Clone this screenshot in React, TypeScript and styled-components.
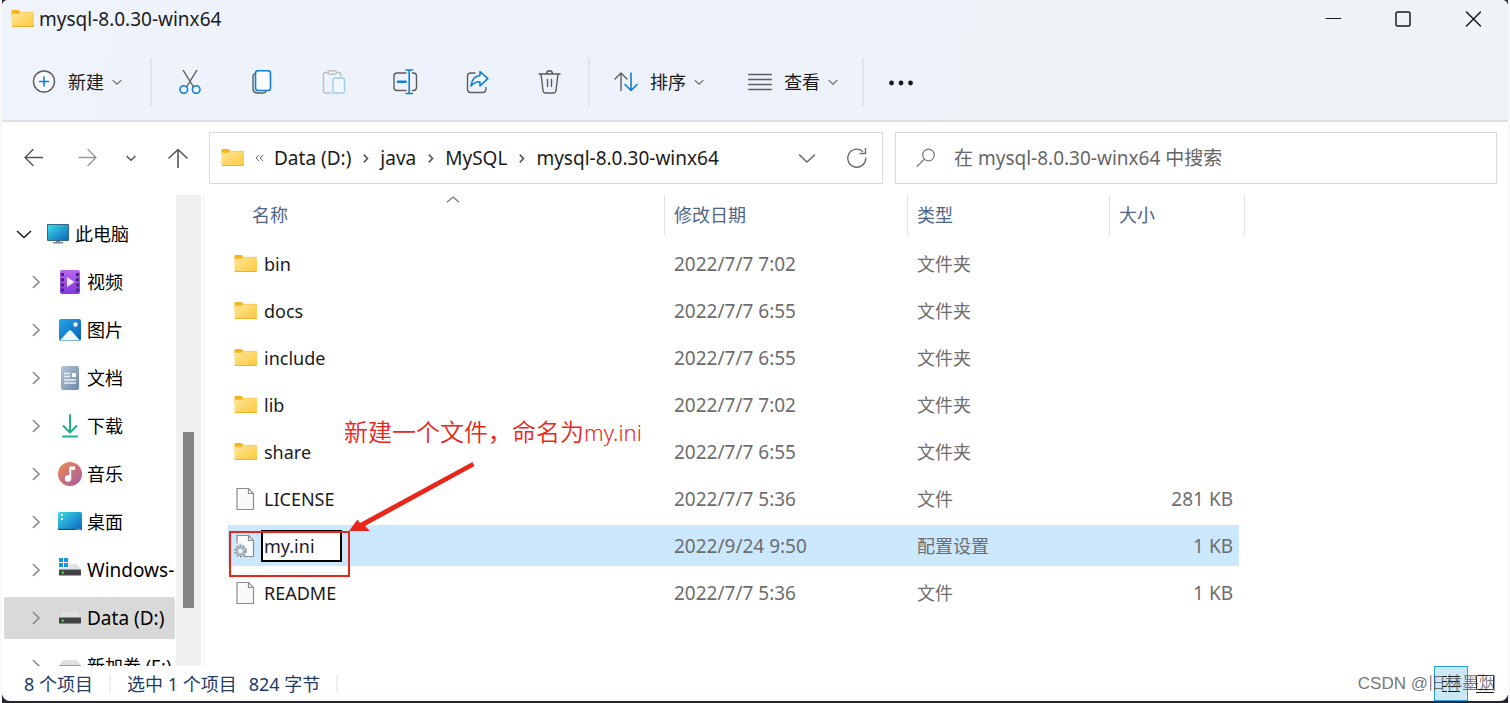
import React from 'react';
import styled, { createGlobalStyle } from 'styled-components';

const GlobalStyle = createGlobalStyle`
  *, *::before, *::after { box-sizing: border-box; }
  body {
    margin: 0;
    font-family: "Noto Sans", "Noto Sans CJK SC", sans-serif;
    font-size: 18px;
    line-height: 24px;
    color: #1b1b1b;
  }
  button, input {
    font: inherit;
    color: inherit;
    margin: 0;
    padding: 0;
    border: 0;
    background: none;
  }
  svg { display: block; flex: none; }
`;

const Desktop = styled.div`
  height: 100vh;
  padding: 0 2px 2px;
  display: flex;
  background:
    linear-gradient(#2a2e36, #2a2e36) 2px 0 / calc(100% - 4px) 8px no-repeat,
    linear-gradient(#23262e, #23262e) 2px 100% / calc(100% - 4px) 8px no-repeat,
    #f8f8f8;
`;

const Window = styled.main`
  flex: 1;
  min-width: 0;
  display: flex;
  flex-direction: column;
  border-radius: 6px 6px 8px 8px;
  overflow: hidden;
  background: #fff;
`;

const Chrome = styled.header`
  flex: none;
  background: linear-gradient(100deg, #eff3fb, #edf2fa 50%, #eef3f8 65%, #eef3f8);
  border-bottom: 2px solid #dce1e5;
`;

const TitleBar = styled.div`
  height: 38px;
  display: flex;
  align-items: center;
  gap: 4px;
  padding-left: 9px;
`;

const Title = styled.h1`
  margin: 0;
  flex: 1;
  font-size: 19px;
  font-weight: 400;
`;

const ControlGroup = styled.div`
  height: 38px;
  display: flex;
`;

const IconButton = styled.button<{ $width: number }>`
  width: ${(p) => p.$width}px;
  height: 100%;
  flex: none;
  display: flex;
  align-items: center;
  justify-content: center;
`;

const Toolbar = styled.div`
  height: 48px;
  margin: 20px 0 14px;
  padding-left: 8px;
  display: flex;
  align-items: center;
`;

const Divider = styled.span`
  width: 2px;
  height: 48px;
  margin: 0 2px;
  background: #dfe4ea;
`;

const DropButton = styled.button<{ $end?: number }>`
  height: 100%;
  display: flex;
  align-items: center;
  padding: 0 ${(p) => p.$end ?? 22}px 0 22px;
  gap: 8px;
`;

const DropLabel = styled.span`
  padding-left: 4px;
`;

const AddressRow = styled.div`
  flex: none;
  display: grid;
  grid-template-columns: auto 674fr 614fr;
  padding: 10px 11px 11px 5px;
`;

const NavButtons = styled.div`
  height: 52px;
  display: flex;
`;

const AddressBox = styled.div`
  min-width: 0;
  height: 52px;
  border: 1px solid #d9d9d9;
  display: flex;
  align-items: center;
  padding-left: 11px;
`;

const Crumbs = styled.nav`
  flex: 1;
  min-width: 0;
  display: flex;
  align-items: center;
  font-size: 19px;
  white-space: nowrap;
`;

const Crumb = styled.a`
  color: #1b1b1b;
  text-decoration: none;
`;

const CrumbGap = styled.span`
  width: 29px;
  flex: none;
  display: flex;
  justify-content: center;
`;

const SearchBox = styled.label`
  min-width: 0;
  height: 52px;
  margin-left: 12px;
  border: 1px solid #d9d9d9;
  display: flex;
  align-items: center;
  gap: 18px;
  padding: 0 20px;
`;

const SearchInput = styled.input`
  flex: 1;
  min-width: 0;
  font-size: 19px;
  outline: 0;
  &::placeholder { color: #666; opacity: 1; }
`;

const Body = styled.div`
  flex: 1;
  min-height: 0;
  display: flex;
`;

const Sidebar = styled.nav`
  width: 174px;
  flex: none;
  overflow: hidden;
  padding: 18px 1px 0 2px;
  display: flex;
  flex-direction: column;
  gap: 6px;
`;

const TreeItem = styled.button<{ $root?: boolean; $active?: boolean }>`
  height: 42px;
  flex: none;
  display: flex;
  align-items: center;
  padding-left: ${(p) => (p.$root ? 12 : 24)}px;
  background: ${(p) => (p.$active ? '#d9d9d9' : 'transparent')};
  border-radius: 2px;
  overflow: hidden;
  white-space: nowrap;
  color: #000;
`;

const TreeIcon = styled.span`
  margin: 0 5px 0 14px;
`;

const TreeLabel = styled.span<{ $latin?: boolean }>`
  font-size: ${(p) => (p.$latin ? 19 : 18)}px;
`;

const ScrollTrack = styled.div`
  width: 25px;
  flex: none;
  background: #f0f0f0;
  padding: 237px 7px 0;
`;

const ScrollThumb = styled.div`
  height: 176px;
  background: #858585;
`;

const Pane = styled.section`
  position: relative;
  flex: 1;
  min-width: 0;
  margin-left: 2px;
  border-left: 2px solid #f7f7f7;
  padding-left: 23px;
  overflow: hidden;
`;

const FileTable = styled.table`
  width: 1017px;
  table-layout: fixed;
  border-collapse: collapse;
  th, td { padding: 0; font-weight: 400; text-align: left; }
  th { height: 45px; vertical-align: top; }
  td { height: 47px; }
`;

const HeadCell = styled.div<{ $indent: number }>`
  position: relative;
  height: 40px;
  display: flex;
  align-items: center;
  padding-left: ${(p) => p.$indent}px;
  border-right: 1px solid #e3e3e3;
  color: #4f6486;
`;

const SortMark = styled.span`
  position: absolute;
  top: -2px;
  left: 50%;
`;

const Cell = styled.div<{ $selected?: boolean; $indent?: number }>`
  height: 41px;
  display: flex;
  align-items: center;
  padding-left: ${(p) => p.$indent ?? 9}px;
  background: ${(p) => (p.$selected ? '#cce8ff' : 'transparent')};
  color: #6d6d6d;
`;

const NumberCell = styled(Cell)`
  font-size: 19px;
`;

const SizeCell = styled(NumberCell)`
  justify-content: flex-end;
  margin-right: 6px;
  padding-right: 6px;
`;

const FileName = styled.span`
  padding-left: 6px;
  color: #1b1b1b;
`;

const RenameInput = styled.input`
  width: 81px;
  height: 32px;
  margin-left: 3px;
  padding: 0 1px;
  border: 2px solid #000;
  background: #fff;
  color: #1b1b1b;
  outline: 0;
`;

const Note = styled.p`
  position: absolute;
  left: 139px;
  top: 221px;
  margin: 0;
  font-size: 24px;
  font-weight: 350;
  line-height: 32px;
  white-space: nowrap;
  color: #e8261a;
`;

const NoteFile = styled.span`
  font-size: 22px;
`;

const Markup = styled.svg`
  position: absolute;
  left: 23px;
  top: 265px;
  pointer-events: none;
`;

const StatusBar = styled.footer`
  position: relative;
  flex: none;
  height: 35px;
  display: flex;
  align-items: center;
  padding: 0 6px 0 22px;
  color: #233c66;
`;

const StatusDivider = styled.span`
  width: 2px;
  height: 18px;
  margin: 0 16px;
  background: #f0f0f0;
`;

const StatusText = styled.span`
  margin-right: 12px;
`;

const Spacer = styled.span`
  flex: 1;
`;

const ViewButton = styled.button<{ $on?: boolean }>`
  width: 34px;
  height: 35px;
  display: flex;
  align-items: center;
  justify-content: center;
  border: 1px solid ${(p) => (p.$on ? '#26a0da' : 'transparent')};
  background: ${(p) => (p.$on ? '#cce8f6' : 'transparent')};
`;

const Watermark = styled.span`
  position: absolute;
  right: 12px;
  top: 6px;
  color: rgba(80, 80, 80, 0.8);
  font-family: "Liberation Sans", "Noto Sans CJK SC", sans-serif;
  font-size: 17px;
  font-weight: 350;
  pointer-events: none;
`;

const FolderIcon = () => (
  <svg width="24" height="20" viewBox="0 0 24 20">
    <defs>
      <linearGradient id="folder" x1="0" y1="0" x2="1" y2="1">
        <stop offset="0" stopColor="#ffe69a" />
        <stop offset="1" stopColor="#fdc93c" />
      </linearGradient>
    </defs>
    <path d="M0.5 2.3Q0.5 1 1.8 1H7q.9 0 1.3.6L9 3v5H.5z" fill="#f8b31b" />
    <path d="M.5 4.8H7.5L9 3H22.3q.7 0 .7.7V17.3q0 .7-.7.7H1.2q-.7 0-.7-.7z" fill="url(#folder)" />
    <path d="M.8 17.5H22.7" stroke="#eeb02e" />
    <path d="M9 3.3H22.5" stroke="#f6c24c" strokeWidth=".7" />
  </svg>
);

const FileIcon = ({ gear }: { gear?: boolean }) => (
  <svg width="24" height="24" viewBox="0 0 24 24" fill="none">
    <path d="M3 1.5H14.5L19.5 6.5V22.5H3z" fill="#fafafa" stroke="#8c8c8c" strokeWidth="1.2" />
    <path d="M14.5 1.5V6.5H19.5" stroke="#8c8c8c" strokeWidth="1.2" />
    {gear && (
      <>
        <path d="M1 9.500H9L13 17 9 23.500H1z" fill="#dfeaf3" />
        <circle cx="6.500" cy="17" r="5.200" stroke="#8b969f" strokeWidth="2.400" strokeDasharray="1.900 1.367" />
        <circle cx="6.500" cy="17" r="3.600" stroke="#a9b4bd" strokeWidth="2.600" fill="#eef3f7" />
      </>
    )}
  </svg>
);

type ChevronProps = { dir: 'up' | 'down' | 'right'; size: number; color: string; width?: number };
const chevrons = { up: 'M1 10.5 8 4.5 15 10.5', down: 'M1 5 8 11.5 15 5', right: 'M5 1 11.5 8 5 15' };
const Chevron = ({ dir, size, color, width = 1.2 }: ChevronProps) => (
  <svg width={size} height={size} viewBox="0 0 16 16" fill="none" stroke={color} strokeWidth={(width * 16) / size}>
    <path d={chevrons[dir]} />
  </svg>
);

const TreeArrow = () => (
  <svg width="16" height="16" viewBox="0 0 16 16" fill="none" stroke="#8a8a8a" strokeWidth="1.6">
    <path d="M5 2 11 8 5 14" />
  </svg>
);

type LineProps = { size?: number; color?: string; width?: number; children: React.ReactNode };
const Line = ({ size = 24, color = '#5c5c5c', width = 1.4, children }: LineProps) => (
  <svg width={size} height={size} viewBox={`0 0 ${size} ${size}`} fill="none" stroke={color} strokeWidth={width} strokeLinecap="round" strokeLinejoin="round">
    {children}
  </svg>
);

const blue = '#0f7fd8';

const tools = [
  {
    name: '剪切',
    art: (
      <Line>
        <path d="M5 0 15.500 17M19 0 8.500 17" />
        <circle cx="5.800" cy="19.500" r="3.800" stroke={blue} strokeWidth="1.600" />
        <circle cx="18.200" cy="19.500" r="3.800" stroke={blue} strokeWidth="1.600" />
      </Line>
    ),
  },
  {
    name: '复制',
    art: (
      <Line>
        <path d="M4.500 3.500Q3 4.500 3 6.500V18.500Q3 23 7.500 23H13Q15 23 16 21.500" />
        <rect x="5.500" y=".7" width="15" height="19.800" rx="2.600" fill="#f9fbfd" stroke={blue} strokeWidth="1.600" />
      </Line>
    ),
  },
  {
    name: '粘贴',
    art: (
      <Line color="#b9bec4">
        <path d="M6 2.500H3.500Q1.500 2.500 1.500 4.500V21Q1.500 23 3.500 23H9M15.500 2.500H17Q18.800 2.500 18.800 4.500V6" />
        <rect x="6" y=".8" width="8.500" height="3.400" rx="1.700" />
        <rect x="11" y="8" width="11.500" height="15" rx="2" fill="#f2f8fd" stroke="#9fcdf0" />
      </Line>
    ),
  },
  {
    name: '重命名',
    art: (
      <Line size={26}>
        <path d="M13 4H4Q1 4 1 7V18.500Q1 21.500 4 21.500H13M19.500 4H20.500Q23.500 4 23.500 7V18.500Q23.500 21.500 20.500 21.500H19.500" />
        <path d="M13 1H19.500M16.200 1V24.500M13 24.500H19.500" stroke={blue} strokeWidth="1.600" />
        <path d="M5 12.800H12.500" stroke={blue} strokeWidth="2.600" />
      </Line>
    ),
  },
  {
    name: '共享',
    art: (
      <Line>
        <path d="M9 3H5Q1.500 3 1.500 6.500V19Q1.500 22.500 5 22.500H16.500Q20 22.500 20 19V17.500" />
        <path d="M14 1.500 21.800 8.700 14 15.800V11.700Q8.500 11.500 5 16Q6 6.500 14 5.500z" stroke={blue} strokeWidth="1.600" fill="#f5f9fd" />
      </Line>
    ),
  },
  {
    name: '删除',
    art: (
      <Line>
        <path d="M1 4H22M8.500 4Q8.500 .8 11.500 .8T14.500 4M3 4 5 20.500Q5.300 23 7.500 23H15.500Q17.700 23 18 20.500L20 4M9.500 9.500V16.500M13.500 9.500V16.500" />
      </Line>
    ),
  },
];

const PcIcon = () => (
  <svg width="24" height="24" viewBox="0 0 24 24">
    <defs>
      <linearGradient id="screen" x1="0" y1="0" x2="1" y2="1">
        <stop offset="0" stopColor="#3ddbe6" />
        <stop offset="1" stopColor="#0a64bd" />
      </linearGradient>
    </defs>
    <rect x="1" y="2" width="22" height="17" rx="1" fill="#35678a" />
    <rect x="2" y="3" width="20" height="15" fill="url(#screen)" />
    <path d="M10 19H14V20H17V21.500H7V20H10z" fill="#7b8791" />
  </svg>
);

const VideoIcon = () => (
  <svg width="24" height="24" viewBox="0 0 24 24">
    <defs>
      <linearGradient id="video" x1="0" y1="0" x2="0" y2="1">
        <stop offset="0" stopColor="#b768f0" />
        <stop offset="1" stopColor="#8238dc" />
      </linearGradient>
    </defs>
    <rect x="2" y="0" width="20" height="24" rx="2" fill="url(#video)" />
    <path d="M4.500 3V22M19.500 3V22" stroke="#4b2183" strokeWidth="3" strokeDasharray="3 2.200" />
    <path d="M9 7 16.500 12 9 17z" fill="#f1e9fb" />
  </svg>
);

const PictureIcon = () => (
  <svg width="24" height="24" viewBox="0 0 24 24">
    <defs>
      <linearGradient id="picture" x1="0" y1="0" x2="1" y2="1">
        <stop offset="0" stopColor="#23a5ec" />
        <stop offset="1" stopColor="#0a5fb4" />
      </linearGradient>
    </defs>
    <rect x="1" y="1" width="22" height="22" rx="2" fill="url(#picture)" />
    <circle cx="17.500" cy="6.500" r="2.200" fill="#fff" />
    <path d="M2 22.500 10.500 13Q12 11.500 13.500 13L22 22.500z" fill="#eef6fc" />
  </svg>
);

const DocIcon = () => (
  <svg width="24" height="24" viewBox="0 0 24 24">
    <defs>
      <linearGradient id="doc" x1="0" y1="0" x2="1" y2="1">
        <stop offset="0" stopColor="#b3c4d6" />
        <stop offset="1" stopColor="#6d8aa8" />
      </linearGradient>
    </defs>
    <rect x="3" y="0" width="18" height="24" rx="2" fill="url(#doc)" />
    <path d="M6 7.500H12M6 10.500H12M6 14H18M6 17H18" stroke="#e9f0f7" strokeWidth="1.500" />
    <rect x="14" y="7" width="4" height="4" fill="#fff" />
  </svg>
);

const DownloadIcon = () => (
  <Line color="#1fb089" width={2}>
    <path d="M12 1V18M5.500 12 12 18.500 18.500 12M5 22.500H19" />
  </Line>
);

const MusicIcon = () => (
  <svg width="24" height="24" viewBox="0 0 24 24">
    <defs>
      <linearGradient id="music" x1="0" y1="0" x2="1" y2="1">
        <stop offset="0" stopColor="#f08a4e" />
        <stop offset="1" stopColor="#a259a8" />
      </linearGradient>
    </defs>
    <circle cx="12" cy="12" r="12" fill="url(#music)" />
    <circle cx="10" cy="16.500" r="3.200" fill="#fff" />
    <path d="M11.200 4.500H17V8H13.200V17H11.200z" fill="#fff" />
  </svg>
);

const DesktopIcon = () => (
  <svg width="24" height="24" viewBox="0 0 24 24">
    <rect x="0" y="2" width="24" height="18" rx="1.500" fill="url(#screen)" />
    <path d="M3 4H5V6H3zM3 8H5V10H3z" fill="#e5fbff" />
    <path d="M0 19.400H24" stroke="#0b4f92" />
    <path d="M18.500 19.300H23" stroke="#cfe6f8" strokeDasharray="1 1" />
  </svg>
);

const DriveIcon = ({ system }: { system?: boolean }) => (
  <svg width="24" height="24" viewBox="0 0 24 24">
    <path d="M5 6H19L23 11.500H1z" fill="#dfe1e4" />
    <rect x="1" y="11.500" width="22" height="6" rx=".6" fill="#414345" />
    <rect x="3.500" y="13.500" width="2.400" height="2.400" fill="#35d13c" />
    {system && (
      <>
        <rect x="0" y="0" width="11" height="10" fill="#fff" />
        <path d="M1 0H5V4H1zM6 0H10V4H6zM1 5H5V9H1zM6 5H10V9H6z" fill="#1595e0" />
      </>
    )}
  </svg>
);

const tree = [
  { label: '视频', icon: <VideoIcon /> },
  { label: '图片', icon: <PictureIcon /> },
  { label: '文档', icon: <DocIcon /> },
  { label: '下载', icon: <DownloadIcon /> },
  { label: '音乐', icon: <MusicIcon /> },
  { label: '桌面', icon: <DesktopIcon /> },
  { label: 'Windows-', icon: <DriveIcon system />, latin: true },
  { label: 'Data (D:)', icon: <DriveIcon />, latin: true, active: true },
  { label: '新加卷 (E:)', icon: <DriveIcon /> },
];

type Entry = { name: string; date: string; type: string; size?: string; kind: 'folder' | 'file' | 'config' };
const entries: Entry[] = [
  { name: 'bin', date: '2022/7/7 7:02', type: '文件夹', kind: 'folder' },
  { name: 'docs', date: '2022/7/7 6:55', type: '文件夹', kind: 'folder' },
  { name: 'include', date: '2022/7/7 6:55', type: '文件夹', kind: 'folder' },
  { name: 'lib', date: '2022/7/7 7:02', type: '文件夹', kind: 'folder' },
  { name: 'share', date: '2022/7/7 6:55', type: '文件夹', kind: 'folder' },
  { name: 'LICENSE', date: '2022/7/7 5:36', type: '文件', size: '281 KB', kind: 'file' },
  { name: 'my.ini', date: '2022/9/24 9:50', type: '配置设置', size: '1 KB', kind: 'config' },
  { name: 'README', date: '2022/7/7 5:36', type: '文件', size: '1 KB', kind: 'file' },
];

const path = ['Data (D:)', 'java', 'MySQL', 'mysql-8.0.30-winx64'];

const FileRow = ({ entry }: { entry: Entry }) => {
  const selected = entry.kind === 'config';
  return (
    <tr>
      <td>
        <Cell $selected={selected} $indent={6}>
          {entry.kind === 'folder' ? <FolderIcon /> : <FileIcon gear={selected} />}
          {selected ? <RenameInput aria-label="文件名" defaultValue={entry.name} /> : <FileName>{entry.name}</FileName>}
        </Cell>
      </td>
      <td><NumberCell $selected={selected}>{entry.date}</NumberCell></td>
      <td><Cell $selected={selected}>{entry.type}</Cell></td>
      <td><SizeCell $selected={selected}>{entry.size}</SizeCell></td>
    </tr>
  );
};

export default function App() {
  return (
    <Desktop>
      <GlobalStyle />
      <Window>
        <Chrome>
          <TitleBar>
            <FolderIcon />
            <Title>mysql-8.0.30-winx64</Title>
            <ControlGroup>
              <IconButton $width={70} aria-label="最小化">
                <Line size={16} color="#1b1b1b" width={1.2}><path d="M1 7.500H15.500" /></Line>
              </IconButton>
              <IconButton $width={70} aria-label="最大化">
                <Line size={16} color="#1b1b1b" width={1.5}><rect x="1" y="1" width="14" height="14" rx="1.500" /></Line>
              </IconButton>
              <IconButton $width={70} aria-label="关闭">
                <Line size={16} color="#1b1b1b" width={1.5}><path d="M1.500 1 15.500 15M15.500 1 1.500 15" /></Line>
              </IconButton>
            </ControlGroup>
          </TitleBar>
          <Toolbar>
            <DropButton $end={26}>
              <Line>
                <circle cx="12" cy="11.500" r="10.500" fill="#f8fafd" />
                <path d="M12 7V16M7.500 11.500H16.500" stroke={blue} strokeWidth="1.600" />
              </Line>
              <DropLabel>新建</DropLabel>
              <Chevron dir="down" size={10} color="#6b6b6b" />
            </DropButton>
            <Divider />
            {tools.map((tool) => (
              <IconButton key={tool.name} $width={72} aria-label={tool.name}>{tool.art}</IconButton>
            ))}
            <Divider />
            <DropButton>
              <Line>
                <path d="M7 20.500V3M1 9 7 3 13 9" />
                <path d="M17 3V20.500M11 14.500 17 20.500 23 14.500" stroke={blue} strokeWidth="1.600" />
              </Line>
              <DropLabel>排序</DropLabel>
              <Chevron dir="down" size={10} color="#6b6b6b" />
            </DropButton>
            <DropButton>
              <Line>
                <path d="M.7 4.500H23.300M.7 9.500H23.300M.7 14.500H23.300M.7 19.500H23.300" />
              </Line>
              <DropLabel>查看</DropLabel>
              <Chevron dir="down" size={10} color="#6b6b6b" />
            </DropButton>
            <Divider />
            <IconButton $width={70} aria-label="查看更多">
              <svg width="26" height="8" viewBox="0 0 26 8" fill="#1b1b1b">
                <circle cx="3.500" cy="5" r="2.400" />
                <circle cx="13" cy="5" r="2.400" />
                <circle cx="22.500" cy="5" r="2.400" />
              </svg>
            </IconButton>
          </Toolbar>
        </Chrome>

        <AddressRow>
          <NavButtons>
            <IconButton $width={54} aria-label="后退">
              <Line size={20} color="#555"><path d="M18.500 9.500H1M9 1.500 1 9.500 9 17.500" /></Line>
            </IconButton>
            <IconButton $width={54} aria-label="前进">
              <Line size={20} color="#999"><path d="M1 9.500H18M10 1.500 18 9.500 10 17.500" /></Line>
            </IconButton>
            <IconButton $width={32} aria-label="最近浏览的位置">
              <Chevron dir="down" size={10} color="#555" width={1.4} />
            </IconButton>
            <IconButton $width={62} aria-label="上移">
              <Line size={20} color="#555" width={1.6}><path d="M10 19.500V1.500M1 10 10 1.500 19 10" /></Line>
            </IconButton>
          </NavButtons>
          <AddressBox>
            <FolderIcon />
            <Crumbs aria-label="地址">
              <CrumbGap>
                <svg width="10" height="8" viewBox="0 0 10 8" fill="none" stroke="#666"><path d="M4 .8 1 4 4 7.200M8.200 .8 5.200 4 8.200 7.200" /></svg>
              </CrumbGap>
              {path.map((part, i) => (
                <React.Fragment key={part}>
                  {i > 0 && (
                    <CrumbGap><Chevron dir="right" size={9} color="#5c5c5c" width={1.7} /></CrumbGap>
                  )}
                  <Crumb href="#">{part}</Crumb>
                </React.Fragment>
              ))}
            </Crumbs>
            <IconButton $width={50} aria-label="展开地址"><Chevron dir="down" size={18} color="#6b6b6b" width={1.4} /></IconButton>
            <IconButton $width={50} aria-label="刷新">
              <Line size={20} color="#6b6b6b"><path d="M18.800 10A9 9 0 1 1 15.500 3.200M18.500 0V5.500H13" /></Line>
            </IconButton>
          </AddressBox>
          <SearchBox>
            <Line size={20} color="#747b88" width={1.2}><circle cx="12.500" cy="7" r="5.800" /><path d="M8.300 11.300 1 18.500" /></Line>
            <SearchInput type="text" aria-label="搜索" placeholder="在 mysql-8.0.30-winx64 中搜索" />
          </SearchBox>
        </AddressRow>

        <Body>
          <Sidebar aria-label="导航窗格">
            <TreeItem $root>
              <Chevron dir="down" size={16} color="#222" width={1.6} />
              <TreeIcon><PcIcon /></TreeIcon>
              <TreeLabel>此电脑</TreeLabel>
            </TreeItem>
            {tree.map((node) => (
              <TreeItem key={node.label} $active={node.active}>
                <TreeArrow />
                <TreeIcon>{node.icon}</TreeIcon>
                <TreeLabel $latin={node.latin}>{node.label}</TreeLabel>
              </TreeItem>
            ))}
          </Sidebar>
          <ScrollTrack><ScrollThumb /></ScrollTrack>
          <Pane>
            <FileTable>
              <colgroup>
                <col width={437} />
                <col width={243} />
                <col width={202} />
                <col width={135} />
              </colgroup>
              <thead>
                <tr>
                  <th>
                    <HeadCell $indent={24}>
                      名称
                      <SortMark><Chevron dir="up" size={14} color="#777" /></SortMark>
                    </HeadCell>
                  </th>
                  <th><HeadCell $indent={9}>修改日期</HeadCell></th>
                  <th><HeadCell $indent={9}>类型</HeadCell></th>
                  <th><HeadCell $indent={9}>大小</HeadCell></th>
                </tr>
              </thead>
              <tbody>
                {entries.map((entry) => <FileRow key={entry.name} entry={entry} />)}
              </tbody>
            </FileTable>
            <Note>新建一个文件，命名为<NoteFile>my.ini</NoteFile></Note>
            <Markup width="260" height="120" viewBox="0 0 260 120">
              <rect x="2" y="72" width="119" height="44" fill="none" stroke="#e8261a" strokeWidth="2" />
              <path d="M244.500 2 246.500 6 137 66 142 71 121 71 129.500 59.500 132 63z" fill="#e8261a" />
            </Markup>
          </Pane>
        </Body>

        <StatusBar>
          <span>8 个项目</span>
          <StatusDivider />
          <StatusText>选中 1 个项目</StatusText>
          <span>824 字节</span>
          <StatusDivider />
          <Spacer />
          <ViewButton $on aria-label="详细信息">
            <svg width="18" height="18" viewBox="0 0 18 18" stroke="#1b1b1b"><path d="M0 1.500H5M6 1.500H18M0 6.500H5M6 6.500H18M0 11.500H5M6 11.500H18M0 16.500H5M6 16.500H18" /></svg>
          </ViewButton>
          <ViewButton aria-label="大图标">
            <svg width="18" height="18" viewBox="0 0 18 18" fill="none" stroke="#1b1b1b"><rect x=".5" y=".5" width="17" height="14" rx="1" /><path d="M0 17.500H18" /></svg>
          </ViewButton>
          <Watermark>CSDN @旧林墨烟</Watermark>
        </StatusBar>
      </Window>
    </Desktop>
  );
}
